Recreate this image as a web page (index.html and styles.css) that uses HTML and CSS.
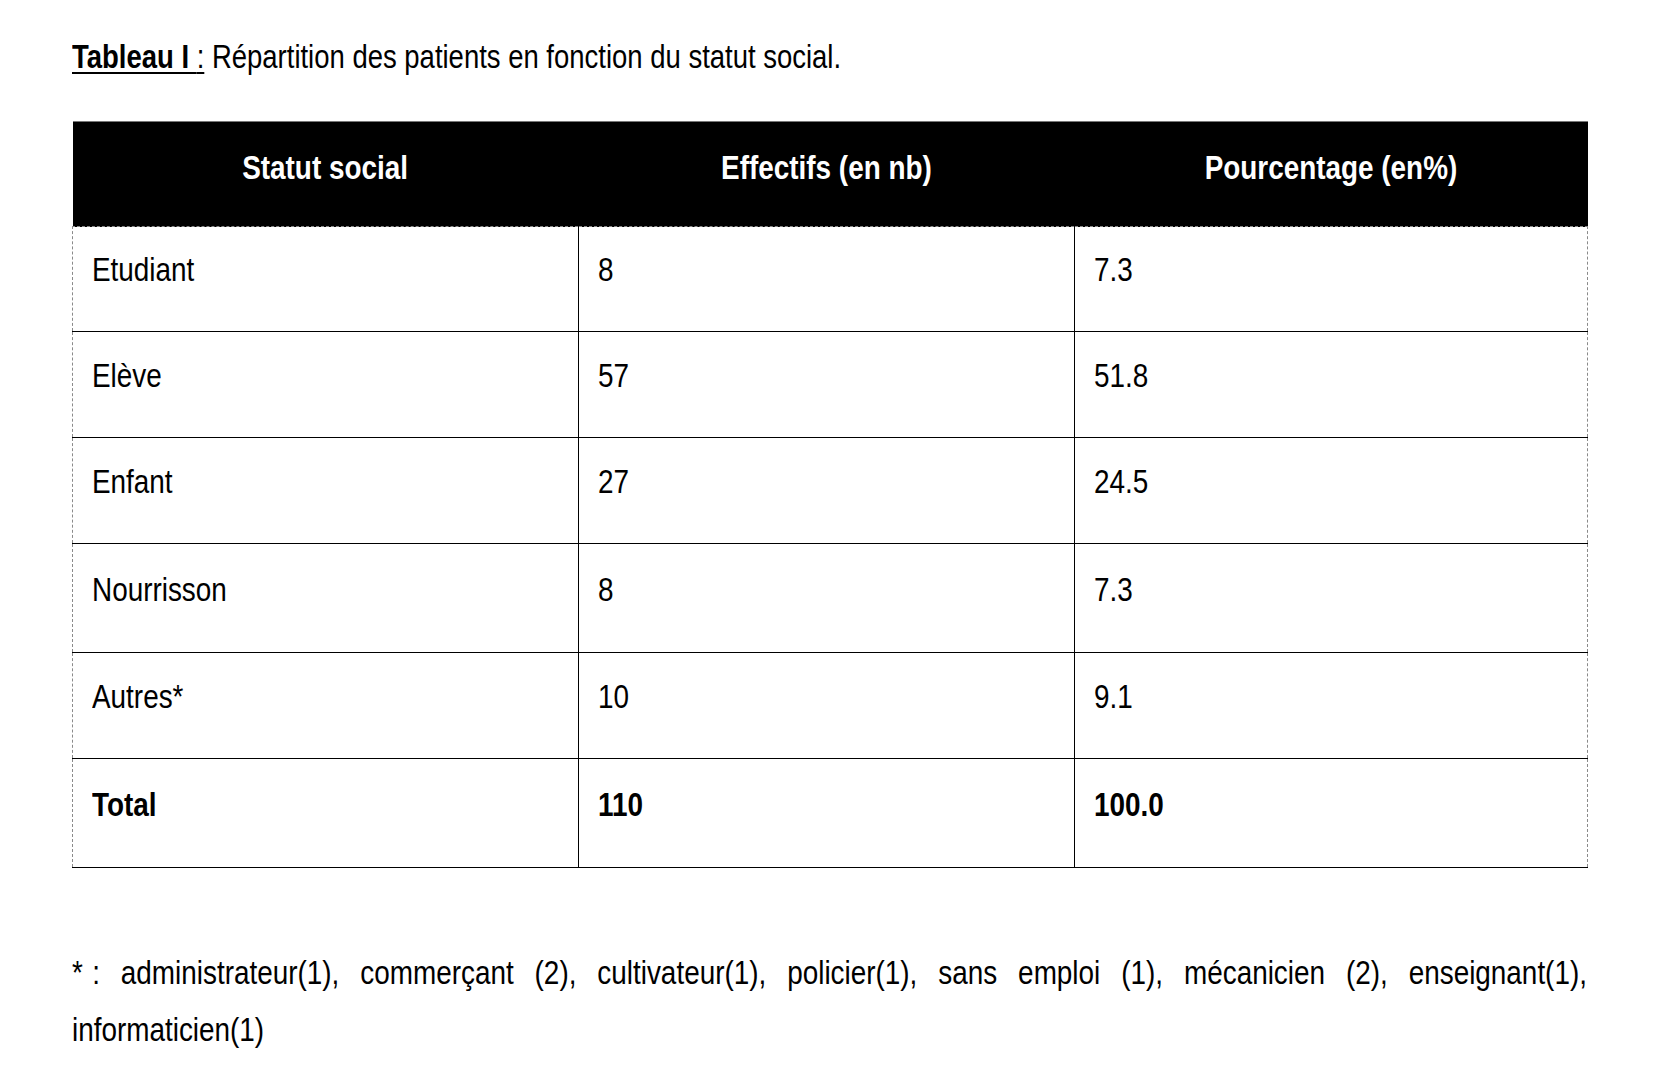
FILE: index.html
```html
<!DOCTYPE html>
<html lang="fr">
<head>
<meta charset="utf-8">
<title>Tableau I</title>
<link rel="stylesheet" href="styles.css">
</head>
<body>
<div class="page">
  <p class="caption"><span class="cap-label"><b>Tableau I&nbsp;</b>:</span> Répartition des patients en fonction du statut social.</p>
  <table class="data">
    <colgroup>
      <col class="c1">
      <col class="c2">
      <col class="c3">
    </colgroup>
    <thead>
      <tr><th><span class="t">Statut social</span></th><th><span class="t">Effectifs (en nb)</span></th><th><span class="t">Pourcentage (en%)</span></th></tr>
    </thead>
    <tbody>
      <tr><td><span class="t">Etudiant</span></td><td><span class="t">8</span></td><td><span class="t">7.3</span></td></tr>
      <tr><td><span class="t">Elève</span></td><td><span class="t">57</span></td><td><span class="t">51.8</span></td></tr>
      <tr><td><span class="t">Enfant</span></td><td><span class="t">27</span></td><td><span class="t">24.5</span></td></tr>
      <tr><td><span class="t">Nourrisson</span></td><td><span class="t">8</span></td><td><span class="t">7.3</span></td></tr>
      <tr><td><span class="t">Autres*</span></td><td><span class="t">10</span></td><td><span class="t">9.1</span></td></tr>
      <tr class="total"><td><span class="t">Total</span></td><td><span class="t">110</span></td><td><span class="t">100.0</span></td></tr>
    </tbody>
  </table>
  <p class="note">*&#8196;: administrateur(1), commerçant (2), cultivateur(1), policier(1), sans emploi (1), mécanicien (2), enseignant(1), informaticien(1)</p>
</div>
</body>
</html>
```
FILE: styles.css
```css
html, body {
  margin: 0;
  padding: 0;
  background: #fff;
}
html {
  overflow-x: hidden;
}
body {
  font-family: "Liberation Sans Narrow", "Arial Narrow", "Liberation Sans", Arial, sans-serif;
  color: #000;
}
.page {
  padding: 38px 0 0 72px;
  width: 1515px;
}
.caption {
  margin: 0;
  width: 1000px;
  font-size: 33.5px;
  line-height: 38px;
  white-space: nowrap;
  transform: scaleX(0.82);
  transform-origin: 0 50%;
}
.cap-label {
  text-decoration: underline;
  text-decoration-thickness: 2px;
  text-underline-offset: 4px;
}
.data {
  margin-top: 45px;
  width: 1515px;
  table-layout: fixed;
  border-collapse: collapse;
  font-size: 34px;
}
.c1 { width: 506px; }
.c2 { width: 496px; }
.c3 { width: 513px; }
.t {
  display: inline-block;
  white-space: nowrap;
  transform: scaleX(0.82);
  transform-origin: 0 50%;
}
.data th {
  background: #000;
  color: #fff;
  font-weight: bold;
  text-align: center;
  vertical-align: top;
  height: 105px;
  box-sizing: border-box;
  padding: 26px 10px 0;
  line-height: 39px;
  border: none;
  border-top: 1px solid #777;
}
.data th .t {
  transform-origin: 50% 50%;
}
.data td {
  vertical-align: top;
  text-align: left;
  height: 107px;
  box-sizing: border-box;
  padding: 23px 18px 0 19px;
  line-height: 39px;
  border-left: 1px solid #000;
  border-right: 1px solid #000;
  border-bottom: 1px solid #000;
}
.data tbody tr:nth-child(1) td { height: 104.5px; padding-top: 23px; }
.data tbody tr:nth-child(2) td { height: 106px; padding-top: 24px; }
.data tbody tr:nth-child(3) td { height: 106px; padding-top: 24px; }
.data tbody tr:nth-child(4) td { height: 109px; padding-top: 26px; }
.data tbody tr:nth-child(5) td { height: 106.6px; padding-top: 24px; }
.data tbody tr:nth-child(6) td { height: 109.4px; padding-top: 26px; }
.data td:first-child {
  border-left: 1px dashed #8a8a8a;
}
.data td:last-child {
  border-right: 1px dashed #8a8a8a;
}
.data tbody tr:first-child td {
  border-top: 1px dashed #8a8a8a;
}
.total td {
  font-weight: bold;
}
.note {
  margin: 76px 0 0;
  width: 1847.5px;
  font-size: 34px;
  line-height: 57px;
  text-align: justify;
  transform: scaleX(0.82);
  transform-origin: 0 0;
}
```
